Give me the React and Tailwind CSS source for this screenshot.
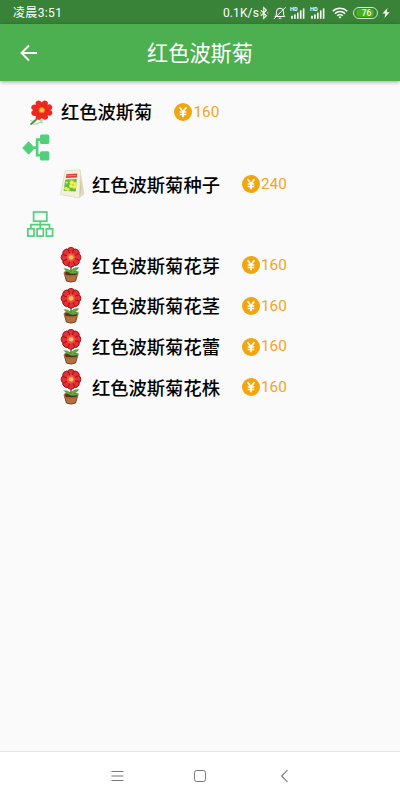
import clsx from "clsx";

const children = [
  { id: 1, name: "红色波斯菊花芽", price: 160 },
  { id: 2, name: "红色波斯菊花茎", price: 160 },
  { id: 3, name: "红色波斯菊花蕾", price: 160 },
  { id: 4, name: "红色波斯菊花株", price: 160 },
];

const petals = [0, 45, 90, 135, 180, 225, 270, 315];

function Signal() {
  return (
    <svg viewBox="0 0 16 12" className="w-4 h-3" fill="#fff">
      <text x="0" y="4.4" fontSize="5.6" fontWeight="700" fontFamily="Roboto, sans-serif">HD</text>
      <rect x="1.2" y="8.8" width="1.6" height="3" />
      <rect x="4.1" y="7.4" width="1.6" height="4.4" />
      <rect x="7" y="5.6" width="1.6" height="6.2" />
      <rect x="9.9" y="3.4" width="1.6" height="8.4" />
      <rect x="12.8" y="1.4" width="1.6" height="10.4" />
    </svg>
  );
}

function StatusBar() {
  return (
    <div className="flex items-center h-6 pl-[13px] pr-[10px] pt-px bg-[#398339] text-white text-[12px] leading-none">
      <span className="flex-1 tracking-[0.35px] pt-px">凌晨3:51</span>
      <span className="w-[34px] tracking-[0.1px] whitespace-nowrap">0.1K/s</span>
      <svg viewBox="0 0 10 14" className="w-[10px] h-[14px] ml-[2px]" fill="none" stroke="#fff" strokeWidth="1.1">
        <path d="M1.8 4.2 7.4 9.8 4.8 12.5V1.5L7.4 4.2 1.8 9.8" />
        <path d="M.8 7h1M8.2 7h1" />
      </svg>
      <svg viewBox="0 0 14 14" className="w-[14px] h-[14px] ml-[4px]" fill="none" stroke="#fff" strokeWidth="1">
        <path d="M2 10.5h9.8L10.6 9V5.8a3.6 3.6 0 0 0-7.2 0V9zM5.7 12.2h2.7M12.6 1.2 1 12.8" />
      </svg>
      <span className="ml-[3px]"><Signal /></span>
      <span className="ml-[4px]"><Signal /></span>
      <svg viewBox="0 0 16 12" className="w-4 h-3 ml-[6px]" fill="none" stroke="#fff" strokeWidth="1.5">
        <path d="M.7 4.2a10.6 10.6 0 0 1 14.6 0M3 6.6a7.3 7.3 0 0 1 10 0M5.2 8.8a4 4 0 0 1 5.6 0" />
        <path d="M8 11.7 6.5 10.1a2 2 0 0 1 3 0z" fill="#fff" stroke="none" />
      </svg>
      <div className="flex items-center w-[25px] h-[12px] ml-[5px] p-[1px] rounded-full border border-[#cfe8c8]">
        <div className="flex items-center justify-center w-[18px] h-2 ml-px rounded-full bg-[#43b21d] text-[8.5px] font-medium pl-[3px] pt-px">
          76
        </div>
      </div>
      <svg viewBox="0 0 8 10" className="w-2 h-[10px] ml-[4px]" fill="#fff">
        <path d="M5.6 0 .5 5.5h3L2.4 10l5.1-5.7h-3z" />
      </svg>
    </div>
  );
}

function FlowerIcon() {
  return (
    <svg viewBox="0 0 26 27" className="w-[26px] h-[27px]">
      <path d="M4 25.5c3 0 6-1 10-4.5M9 24l5-.5M1 21.5l4 1M10 20l3 3" fill="none" stroke="#b5dcae" strokeWidth="1.1" />
      <path d="M11 15C8.5 19.5 6 22.5 1.5 25.5" fill="none" stroke="#4f9350" strokeWidth="1.8" />
      {petals.map((a) => (
        <ellipse key={a} cx="12.8" cy="3.9" rx="3.3" ry="4.2" fill="#ee2a20" transform={`translate(0 1.2) scale(1 .92) rotate(${a + 22} 12.8 10.8)`} />
      ))}
      {petals.map((a) => (
        <path key={a} d="M12.8 7.2V4" stroke="#c91813" strokeWidth=".5" transform={`translate(0 1.2) scale(1 .92) rotate(${a} 12.8 10.8)`} />
      ))}
      <circle cx="12.8" cy="11.2" r="3" fill="#ee6a1a" />
      <circle cx="12.8" cy="11.2" r="2.1" fill="#ffd02c" />
    </svg>
  );
}

function SeedIcon() {
  return (
    <svg viewBox="0 0 26 30" className="w-[26px] h-[30px]">
      <path d="M5.2 1.6 20 .8 24 25 19 29 .6 25.6z" fill="#f4f1da" stroke="#d5d1b8" strokeWidth=".6" />
      <path d="m20 .8 4 24.2-5 4z" fill="#dfdac2" />
      <path d="m20.6 9 1 11-2 7z" fill="#cbc6ab" />
      <path d="m6.4 5.2 10.8-.7-.3 4-11 .5z" fill="#e03a3a" />
      <path d="m7.3 6.9 8.9-.5" stroke="#f59b98" strokeWidth=".8" />
      <path d="m5.4 10.4 11.3-.4-.9 12.6-12.2-.8z" fill="#5fbf45" />
      <g fill="#f3ee4e">
        <circle cx="11.8" cy="13.5" r="2.2" />
        <circle cx="14.8" cy="14.8" r="1.9" />
        <circle cx="14.2" cy="17.8" r="2" />
        <circle cx="11" cy="17" r="2" />
        <circle cx="6" cy="19.5" r="1.8" />
        <circle cx="8.2" cy="20.6" r="1.5" />
        <circle cx="6.8" cy="13.6" r="1.1" />
      </g>
      <circle cx="12.8" cy="15.7" r="1" fill="#dccb2c" />
    </svg>
  );
}

function PotIcon() {
  return (
    <svg viewBox="0 0 22 36" className="w-[22px] h-[36px]">
      <path d="M11 19v9" stroke="#347b29" strokeWidth="1.4" />
      <path d="M4.6 27.6h12.8l-1.8 6.4q-4.6 2.2-9.2 0z" fill="#b4703f" stroke="#6b3a1c" strokeWidth=".9" />
      <ellipse cx="11" cy="26.4" rx="6.8" ry="2.5" fill="#54361c" stroke="#a8693c" strokeWidth="1.3" />
      <path d="M11 26.5C8.5 25.5 5.5 24 4.2 21.6c3 0 5 1 6.8 3.2.8-3 3.6-4.4 7.6-4.2-1 2.2-2.8 3-4.4 3.8 1.6 0 3.4-.2 4.6.6-2 1.2-4.6 2-7.8 1.5z" fill="#63ab3f" stroke="#3f812c" strokeWidth=".4" />
      {petals.map((a) => (
        <path key={a} d="M11 10.3 7.4 3Q7.8.4 11 .4T14.6 3z" fill="#e52f34" stroke="#931219" strokeWidth=".9" strokeLinejoin="round" transform={`rotate(${a} 11 10.3)`} />
      ))}
      <circle cx="11" cy="10.3" r="4.4" fill="#f04c45" />
      <circle cx="11" cy="10.3" r="2.4" fill="#ffc154" stroke="#ef8b35" strokeWidth=".5" />
    </svg>
  );
}

// Recipe inputs
function SourceIcon() {
  return (
    <svg viewBox="0 0 28 28" className="w-7 h-7" fill="#52cf7b">
      <path d="M6.6 7.8 12.5 14l-5.9 6.2L.7 14z" stroke="#52cf7b" strokeWidth="1" strokeLinejoin="round" />
      <rect x="18" y=".6" width="9.3" height="9.3" rx="1.6" />
      <rect x="18" y="17.2" width="9.3" height="9.3" rx="1.6" />
      <path d="M12 13.6h2.3M18.5 5.6h-3.4v15.6h3.4" fill="none" stroke="#52cf7b" strokeWidth="2.6" />
    </svg>
  );
}

// Items produced from this one
function TreeIcon() {
  return (
    <svg viewBox="0 0 28 27" className="w-7 h-[27px]" fill="none" stroke="#52cf7b" strokeWidth="1.7">
      <rect x="7.6" y="1" width="13.2" height="9.2" />
      <rect x="1.8" y="17.8" width="6.2" height="7.3" />
      <rect x="11.1" y="17.8" width="6.2" height="7.3" />
      <rect x="20.4" y="17.8" width="6.2" height="7.3" />
      <path d="M14.2 10.2v7.6M4.9 17.8v-4.1h18.6v4.1" />
    </svg>
  );
}

function Price({ value }) {
  return (
    <div className="flex items-center gap-[1px] text-[#f2a51e] text-[15.4px] leading-none">
      <svg viewBox="0 0 18 18" className="w-[18px] h-[18px]">
        <circle cx="9" cy="9" r="9" fill="#f2a50c" />
        <path d="m5.6 4.3 3.4 4.4 3.4-4.4M9 8.5v5.7M5.7 9h6.6M5.7 11.5h6.6" fill="none" stroke="#fff" strokeWidth="1.7" />
      </svg>
      <span className="pt-px">{value}</span>
    </div>
  );
}

function Item({ icon, name, price, nested }) {
  return (
    <div className={clsx("flex items-center h-[40.7px]", nested ? "pl-[60px]" : "pl-[29px]")}>
      <div className="shrink-0 w-8">{icon}</div>
      <span className="text-[18.3px] leading-none font-medium text-black mr-[22px] pt-[3px]">{name}</span>
      <Price value={price} />
    </div>
  );
}

export default function App() {
  return (
    <div className="flex flex-col h-[800px] w-[400px] overflow-hidden bg-[#fafafa] font-[Roboto,'Noto_Sans_CJK_SC',sans-serif]">
      <StatusBar />
      <header className="grid grid-cols-[60px_1fr_60px] items-center h-[57px] bg-[#4caf50] text-white shadow-[0_1px_4px_rgba(0,0,0,0.35)]">
        <svg viewBox="0 0 18 18" className="w-[18px] h-[18px] ml-5" fill="none" stroke="#fff" strokeWidth="1.9">
          <path d="M17 9H2M9 1.5 1.5 9 9 16.5" />
        </svg>
        <h1 className="text-center text-[21.2px] leading-none font-normal pt-[3px]">红色波斯菊</h1>
      </header>

      <main className="flex-1 pt-[10.8px]">
        <Item icon={<FlowerIcon />} name="红色波斯菊" price={160} />
        <div className="flex items-center h-[31.4px] pl-[22px]">
          <SourceIcon />
        </div>
        <Item icon={<SeedIcon />} name="红色波斯菊种子" price={240} nested />
        <div className="flex items-center h-[40.4px] pl-[26px]">
          <TreeIcon />
        </div>
        {children.map((item) => (
          <Item key={item.id} icon={<PotIcon />} name={item.name} price={item.price} nested />
        ))}
      </main>

      <nav className="flex items-center h-[49px] pl-[110px] pr-[106px] bg-white border-t border-[#e4e4e4]">
        <svg viewBox="0 0 14 14" className="w-[14px] h-[14px]" stroke="#777" strokeWidth="1">
          <path d="M1.5 2.5h12M1.5 7h12M1.5 11.5h12" />
        </svg>
        <svg viewBox="0 0 14 14" className="w-[14px] h-[14px] ml-[69px]" fill="none" stroke="#777" strokeWidth="1">
          <rect x="1.5" y="1.5" width="11" height="11" rx="2" />
        </svg>
        <svg viewBox="0 0 14 14" className="w-[14px] h-[14px] ml-auto" fill="none" stroke="#777" strokeWidth="1.1">
          <path d="M7.5 1.2 1.6 7l5.9 5.8" />
        </svg>
      </nav>
    </div>
  );
}
